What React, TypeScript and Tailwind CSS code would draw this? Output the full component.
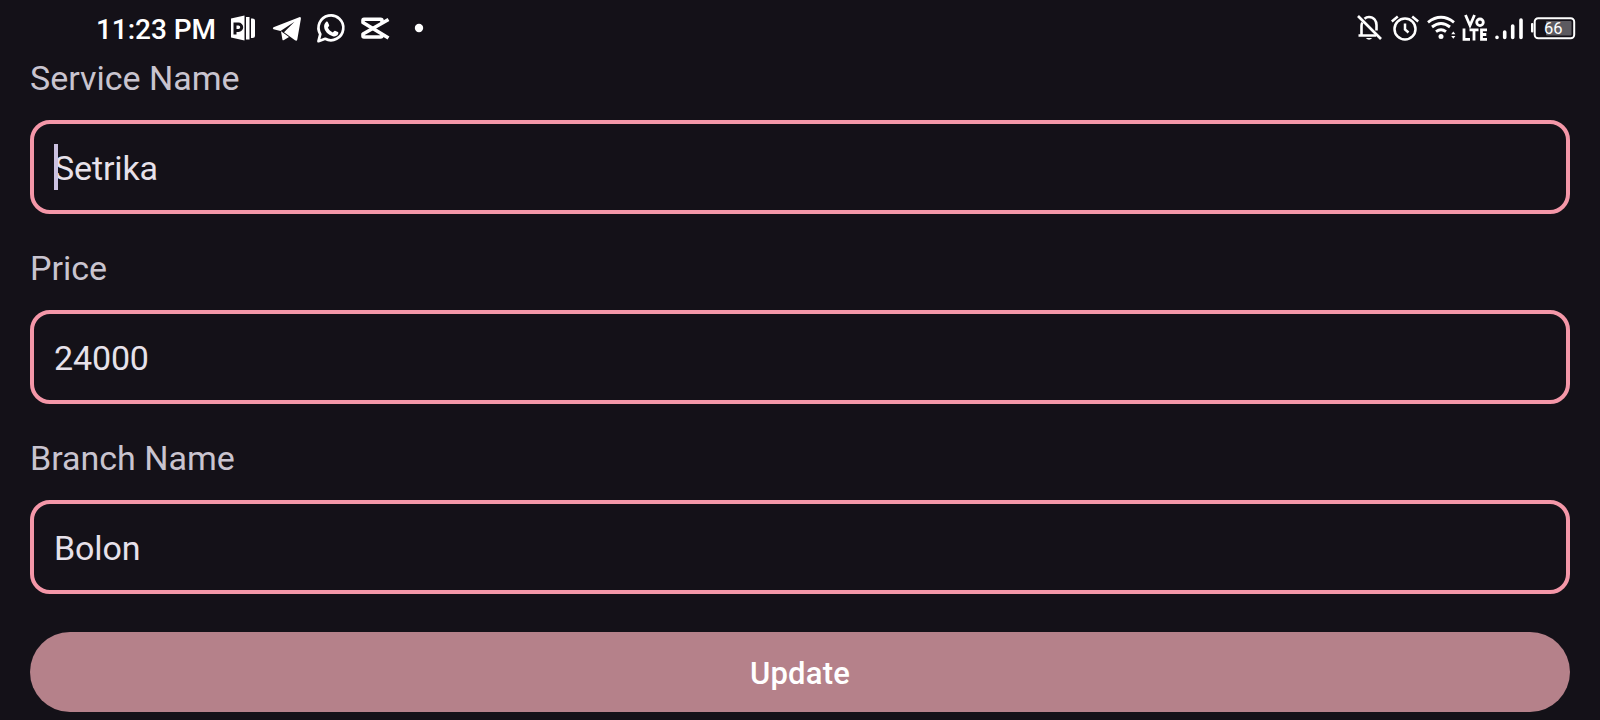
import React, { useState } from 'react';

type FieldProps = { label: string; value: string; onChange: (v: string) => void; cursor?: boolean };

function Field({ label, value, onChange, cursor }: FieldProps) {
  return (
    <label className="flex flex-col gap-[22px]">
      <span className="text-[34px] leading-[40px] text-[#c9c4cf]">{label}</span>
      <span className="relative flex h-[94px] items-center rounded-[20px] border-4 border-[#f497a8] px-5 pt-px">
        {cursor && <span className="absolute left-5 top-5 h-[46px] w-1 bg-[#cbc1e0]" />}
        <input
          className="h-10 w-full bg-transparent text-[34px] leading-[40px] tracking-[-0.15px] text-[#e7e1ea] outline-none"
          value={value}
          onChange={(e) => onChange(e.target.value)}
        />
      </span>
    </label>
  );
}

function StatusBar() {
  return (
    <header className="flex h-14 items-center justify-between pl-24 pr-6 text-white">
      <div className="flex items-center">
        <span className="w-[132px] whitespace-nowrap pt-[3px] text-[28px] font-medium leading-8 tracking-[-0.05px]">11:23 PM</span>
        <svg className="h-8 w-[42px]" viewBox="228 12 42 32" fill="currentColor">
          <path d="M231 18.5 L244.500 15.5 V40.5 L231 37.5Z" />
          <path d="M246 17h3.5v22.500H246zM251 18.500h1.500q2.500 0 2.500 2V36q0 2-2.500 2H251z" />
          <path d="M235 34.500V24h3.500a3.200 3.200 0 0 1 0 6.400h-3" fill="none" stroke="#141118" strokeWidth="3" />
        </svg>
        <svg className="h-8 w-[44px]" viewBox="270 12 44 32" fill="currentColor">
          <path d="M273.500 27.300 299.200 17.200q2-.6 1.700 1.600L297.300 39.500q-.5 2-2.300.8L284 32.200 294.500 21.800 280.500 31 273.500 29.300q-1.400-.9 0-2Z" />
          <path d="M281 31.300 289 37 284 40q-1.300.8-1.600-.6Z" />
        </svg>
        <svg className="h-8 w-[44px]" viewBox="314 12 44 32" fill="none">
          <path d="M318.500 41.200 320.300 34.200A12.400 12.400 0 1 1 325.200 38.800Z" stroke="currentColor" strokeWidth="2.700" strokeLinejoin="round" />
          <path d="M326 22c.7-.6 1.500-.6 1.900.2l1.300 3c.2.700-1.100 1.900-1.400 2.400.9 2.200 2.900 4 5 4.800.6-.4 1.500-1.900 2.200-1.700l2.900 1.400c.8.500.5 1.300.1 2.200-.8 1.700-3.200 2.500-5.200 1.900-4.700-1.300-8.300-4.900-8.700-9.400-.1-2 .8-3.800 1.900-4.800Z" fill="currentColor" />
        </svg>
        <svg className="h-8 w-[48px]" viewBox="358 12 48 32" fill="none" stroke="currentColor" strokeWidth="3.600" strokeLinejoin="round">
          <path d="M388.500 19.500 363 34V36q0 1 1 1H380.500q1.500 0 1.500-1.500V34" />
          <path d="M388.500 38 363 22.500V20.500q0-1.300 1-1.300H380.500q1.500 0 1.500 1.300V22.500" />
        </svg>
        <svg className="h-8 w-[26px]" viewBox="406 12 26 32" fill="currentColor">
          <circle cx="419" cy="28" r="4.200" />
        </svg>
      </div>
      <div className="flex items-center">
        <svg className="h-8 w-[34px]" viewBox="1354 12 34 32" fill="none" stroke="currentColor" strokeWidth="2.600">
          <path d="M1358 16 1381 39" />
          <path d="M1364.500 18.800Q1366.500 17 1369 17C1374 17 1376.500 21 1376.500 25V30.500" />
          <path d="M1362.300 22.500Q1361.500 24 1361.500 26V35.500M1358.500 35.500H1376" />
          <path d="M1365.800 38h6.400q-3.200 3.600-6.400 0z" fill="currentColor" stroke="none" />
        </svg>
        <svg className="h-8 w-[36px]" viewBox="1388 12 36 32" fill="none" stroke="currentColor" strokeWidth="2.500">
          <circle cx="1405" cy="29" r="10.500" />
          <path d="M1405 23.500V29.500L1408.500 32.500" />
          <path d="M1391.800 21.500 1397.800 16.500M1418.200 21.500 1412.200 16.500" />
        </svg>
        <svg className="h-8 w-[36px]" viewBox="1424 12 36 32" fill="none" stroke="currentColor" strokeWidth="2.900">
          <path d="M1428 22.300Q1441 12.300 1454 22.300" />
          <path d="M1432 27Q1441 20 1450 27" />
          <path d="M1436 31.700Q1441 28 1446 31.700" />
          <circle cx="1441" cy="36.500" r="2.500" fill="currentColor" stroke="none" />
          <path d="M1451.200 34.300 1453.300 31.500 1455.400 34.300ZM1451.200 36 1453.300 38.800 1455.400 36Z" fill="currentColor" stroke="none" />
        </svg>
        <svg className="h-8 w-[32px]" viewBox="1460 12 32 32" fill="none" stroke="currentColor" strokeWidth="2.800">
          <path d="M1465.500 15 1470 25.500 1474.500 15" />
          <circle cx="1480" cy="22.300" r="3.300" />
          <path d="M1464 28.500V39.300H1470M1469.500 29.800H1478.500M1474 29.800V40.500M1487 29.800H1481.500V39.300H1487M1481.500 34.500H1486.300" />
        </svg>
        <svg className="h-8 w-[36px]" viewBox="1492 12 36 32" fill="none" stroke="currentColor" strokeWidth="3.600" strokeLinecap="round">
          <path d="M1497 37.300V37.500M1504.700 32V37.500M1512.700 26V37.500M1521 20V37.500" />
        </svg>
        <svg className="h-8 w-[48px]" viewBox="1528 12 48 32" fill="none">
          <rect x="1531" y="23" width="2.400" height="9.500" rx="1" fill="currentColor" />
          <rect x="1534.700" y="18.200" width="39.500" height="20" rx="3.500" stroke="currentColor" strokeWidth="2" />
          <rect x="1546" y="21" width="25.500" height="14.500" rx="1" fill="#5c5a60" />
          <text x="1553.300" y="34" textAnchor="middle" className="font-['Roboto']" fontSize="16.500" fill="currentColor">66</text>
        </svg>
      </div>
    </header>
  );
}

export default function App() {
  const [form, setForm] = useState({ name: 'Setrika', price: '24000', branch: 'Bolon' });
  return (
    <div className="h-[720px] w-full overflow-hidden bg-[#141118] font-['Roboto',sans-serif]">
      <StatusBar />
      <main className="flex flex-col px-[30px] pt-[2px]">
        <div className="flex flex-col gap-[34px]">
          <Field label="Service Name" value={form.name} onChange={(name) => setForm({ ...form, name })} cursor />
          <Field label="Price" value={form.price} onChange={(price) => setForm({ ...form, price })} />
          <Field label="Branch Name" value={form.branch} onChange={(branch) => setForm({ ...form, branch })} />
        </div>
        <button className="mt-[38px] flex h-20 items-center justify-center rounded-full bg-[#b5818a] pt-[5px] text-[31px] font-medium tracking-[0.2px] text-white">
          Update
        </button>
      </main>
    </div>
  );
}
